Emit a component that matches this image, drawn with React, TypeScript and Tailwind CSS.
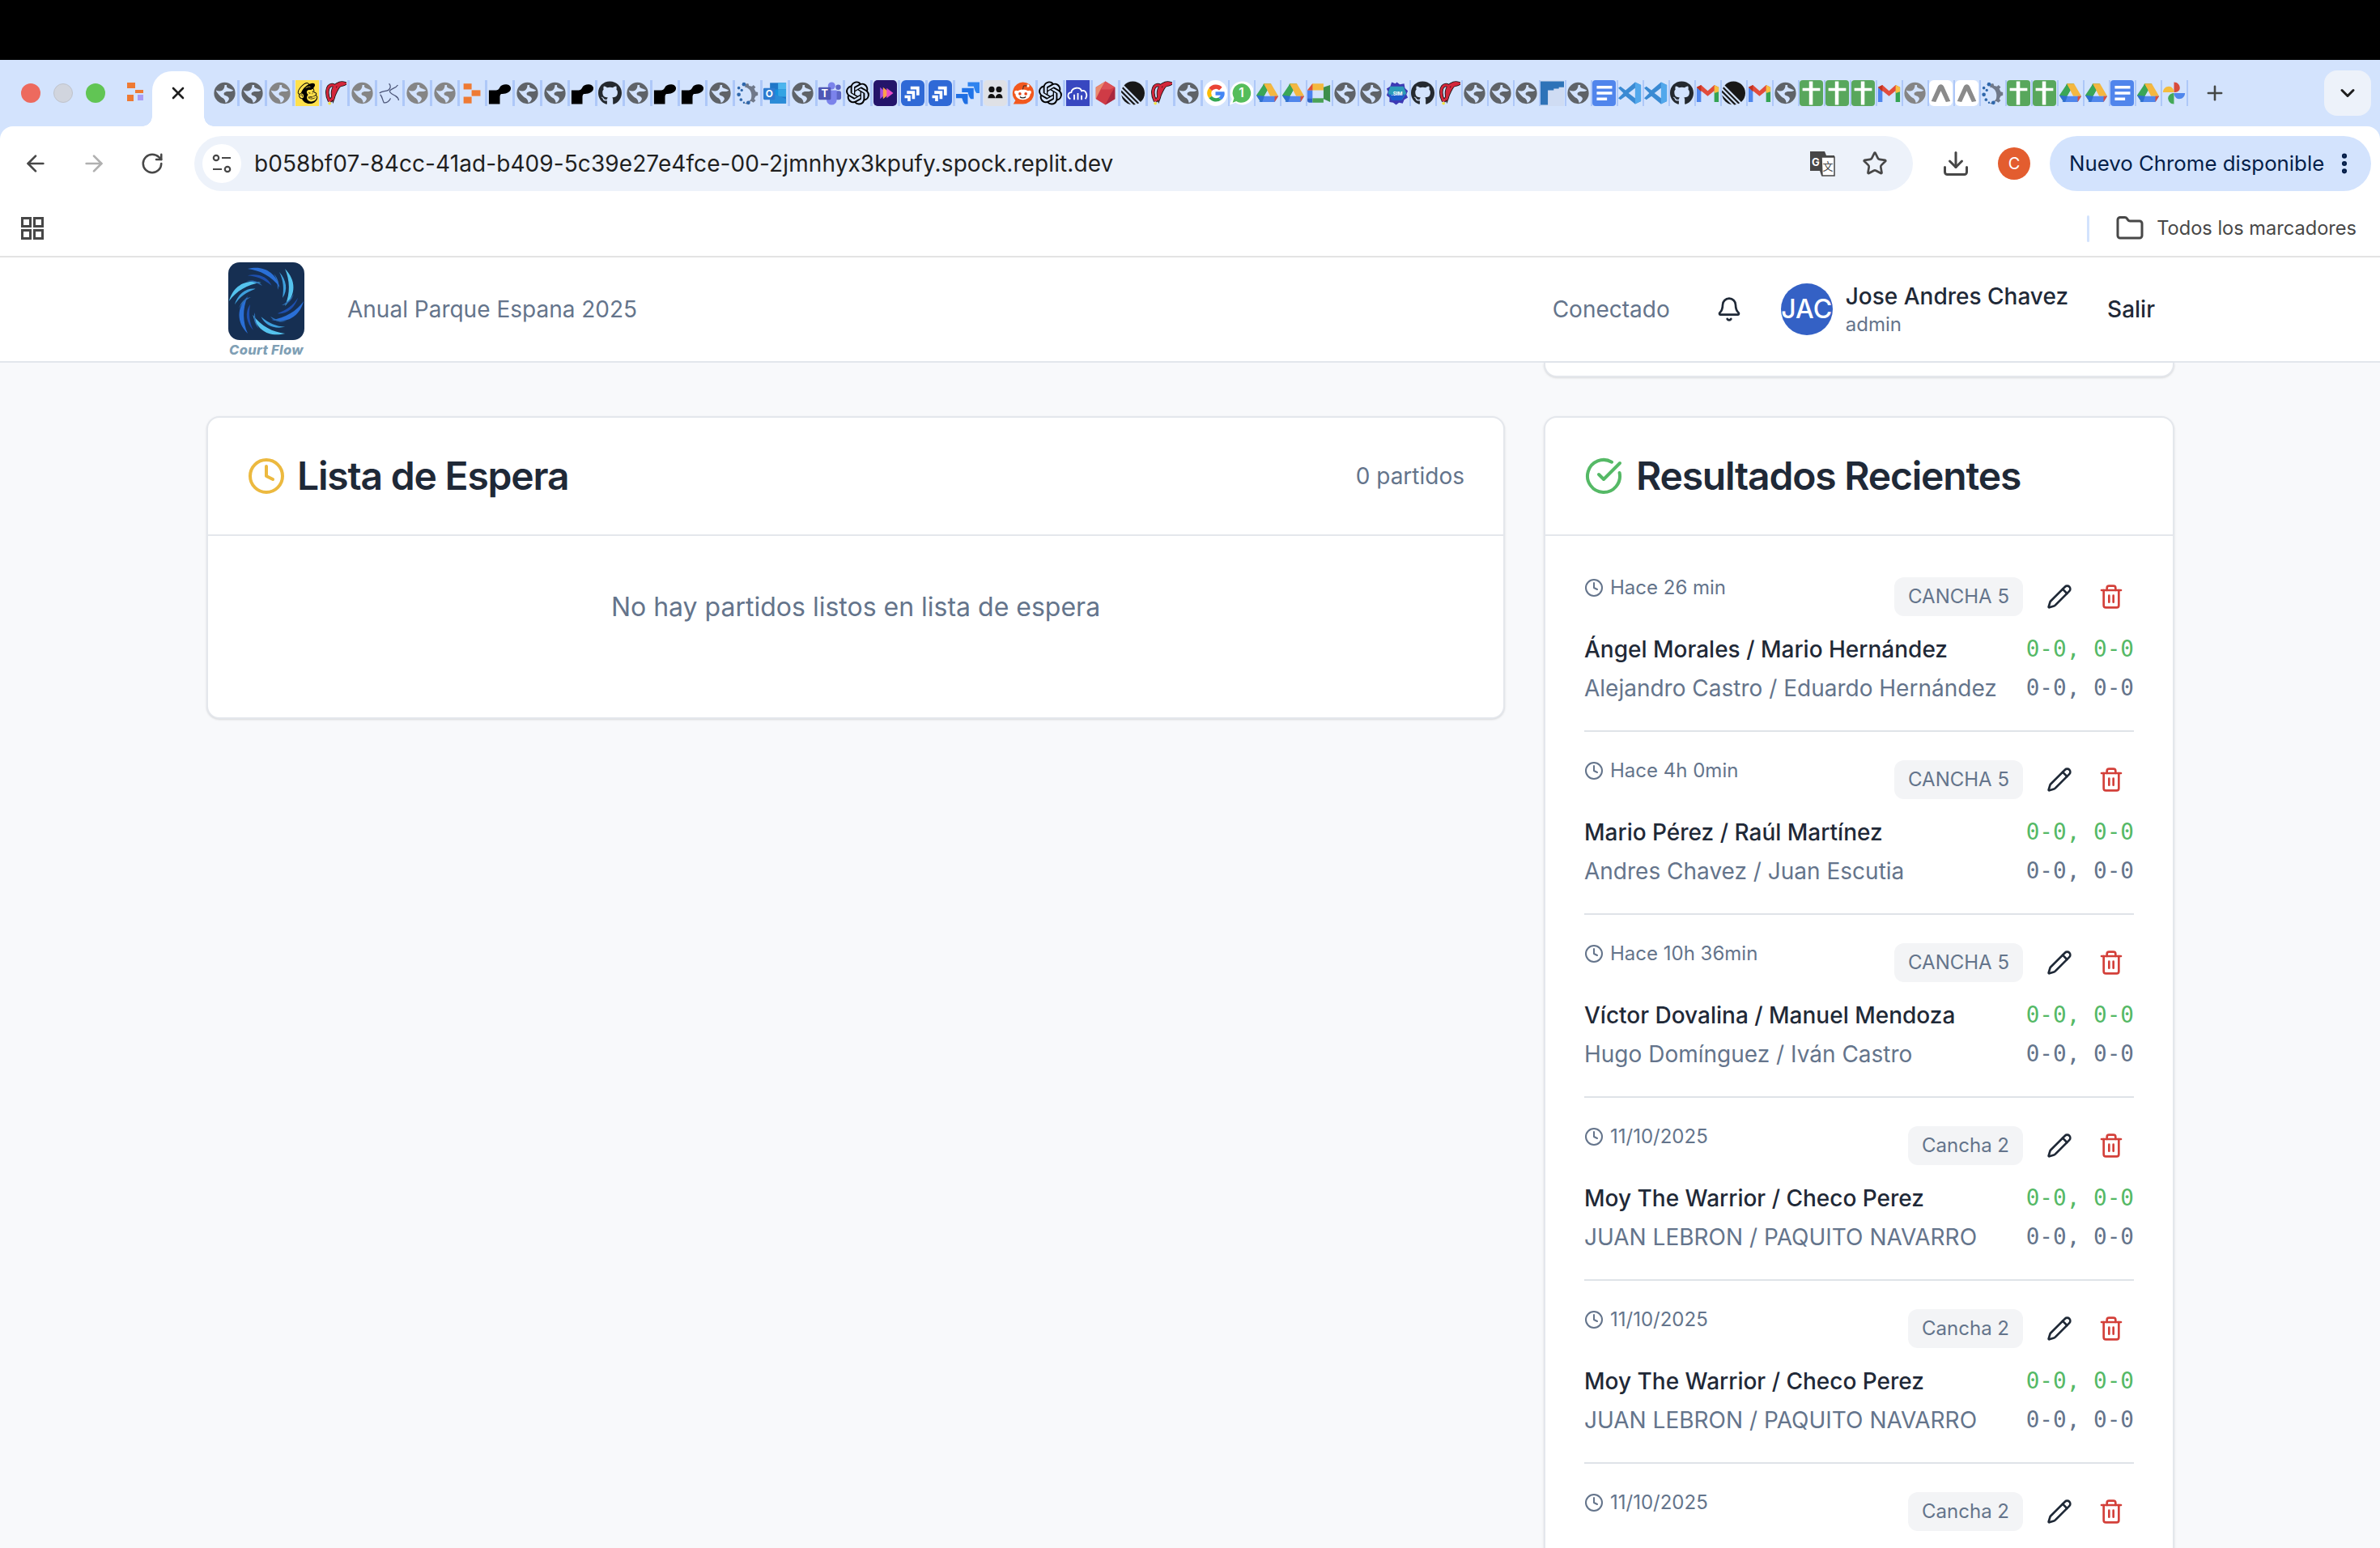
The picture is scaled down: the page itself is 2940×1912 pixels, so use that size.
import {
  ArrowLeft,
  ArrowRight,
  Bell,
  ChevronDown,
  CircleCheckBig,
  Clock,
  Download,
  EllipsisVertical,
  Folder,
  Pencil,
  Plus,
  RotateCw,
  Star,
  Trash2,
  X,
} from "lucide-react";
import { FaGithub } from "react-icons/fa";
import { SiLinear, SiMailchimp, SiOpenai } from "react-icons/si";

// ---- favicons in the tab strip ----

const Box = ({ children }: { children: React.ReactNode }) => (
  <svg viewBox="0 0 32 32" className="h-full w-full">
    {children}
  </svg>
);

const Globe = ({ color = "#5f6368" }: { color?: string }) => (
  <Box>
    <circle cx="16" cy="16" r="14.5" fill={color} />
    <path
      d="M4 12c3 1 6 2 9 0 2-1 3-4 3-7l3 0c-1 3 1 4 4 5l5 2c-3 3-7 1-10 2-3 1-4 3-2 5 3 1 6 2 6 5-1 3-3 5-5 5 0-3-1-4-3-6-3-2-7-5-10-11z"
      fill="#d3e3fd"
    />
  </Box>
);

const Replit = () => (
  <Box>
    <rect x="4" y="3" width="11" height="8" fill="#ee7a33" />
    <rect x="15" y="12" width="12" height="8" fill="#ee7a33" />
    <rect x="4" y="21" width="11" height="9" fill="#ee7a33" />
  </Box>
);

const BlackShape = () => (
  <Box>
    <path d="M1 12h10c3 0 4-2 5-4 2-5 14-6 15 1 0 7-9 8-13 8-2 1-2 3-2 5v9H1z" fill="#000" />
  </Box>
);

const redPath = "M9 27C4 18 5 6 12 5c6-1 5 9 2 17-2-8 0-15 6-18 3-2 7-2 10-1-3 2-7 1-9 4-3 4-5 9-7 14-1 3-3 4-5 6";

const RedP = () => (
  <Box>
    <path d={redPath} fill="none" stroke="#111" strokeWidth="5" />
    <path d={redPath} fill="none" stroke="#d3273b" strokeWidth="3.200" />
    <circle cx="9" cy="30" r="2" fill="#f4e542" />
  </Box>
);

const Swirl = () => (
  <Box>
    <path
      d="M15 3c3 3 2 7-1 9-4 2-9 1-12 4M27 5c-3 5-9 4-11 8-1 3 5 5 8 7 3 2 4 4 4 6M3 18c3 3 3 8 5 11 3 1 8-2 9-6"
      fill="none"
      stroke="#4b5578"
      strokeWidth="1.400"
    />
  </Box>
);

const Gear = () => (
  <Box>
    <path
      d="M14 3l3 0 1 3 4 1 2-2 3 3-2 2 2 4 3 1v4l-3 1-2 4 2 2-3 3-3-2-4 1-2 3-3-1c3-1 8-3 9-7 1-5 0-10-4-13-2-2-4-2-5-2z"
      fill="#70798a"
    />
    <circle cx="11" cy="4" r="2.600" fill="#2f67ab" />
    <circle cx="4" cy="9" r="2" fill="#2f67ab" />
    <circle cx="8" cy="12" r="1.800" fill="#2f67ab" />
    <circle cx="4" cy="18" r="2.600" fill="#2f67ab" />
    <circle cx="7" cy="25" r="2" fill="#2f67ab" />
    <circle cx="11" cy="29" r="1.300" fill="#2f67ab" />
    <circle cx="17" cy="29" r="2.600" fill="#2f67ab" />
  </Box>
);

const Outlook = () => (
  <Box>
    <rect x="9" y="2" width="22" height="28" fill="#1f76c8" />
    <path d="M20 2h11v9H20z" fill="#4cb5ee" />
    <path d="M9 11h11v10H9z" fill="#1490df" />
    <path d="M20 11h11v10H20z" fill="#33a3e3" />
    <path d="M9 15l22 9v6H9z" fill="#2a8cd8" />
    <rect x="0" y="9" width="16" height="16" rx="1.500" fill="#2e7bd0" />
    <text x="8" y="22" fontSize="13" fontWeight="700" fill="#fff" textAnchor="middle" fontFamily="Inter">
      O
    </text>
  </Box>
);

const Teams = () => (
  <Box>
    <circle cx="18" cy="6" r="5" fill="#7b83eb" />
    <circle cx="27" cy="8" r="3.500" fill="#5d66c6" />
    <rect x="23" y="13" width="8" height="12" rx="3" fill="#5d66c6" />
    <path d="M11 12h14v13a7 7 0 0 1-14 0z" fill="#7b83eb" />
    <rect x="0" y="8" width="17" height="17" rx="1.500" fill="#4f58b5" />
    <text x="8.500" y="21.500" fontSize="14" fontWeight="700" fill="#fff" textAnchor="middle" fontFamily="Inter">
      T
    </text>
  </Box>
);

const PurplePlay = () => (
  <div className="h-full w-full rounded-[5px] bg-[#24146a]">
    <Box>
      <path d="M9 8l9 8-9 8z" fill="#a44de0" />
      <path d="M13 8l10 8-10 8z" fill="#ff9f4a" />
      <path d="M18 9l9 7-9 7z" fill="#e94bc8" />
    </Box>
  </div>
);

const JiraBlue = () => (
  <div className="h-full w-full rounded-[6px] bg-[#2f69d6]">
    <Box>
      <path d="M13 7h12v12h-4v-8h-8zM8 13h11v11h-4v-7H8zM5 19h8v8H9v-4H5z" fill="#fff" />
    </Box>
  </div>
);

const JiraPlain = () => (
  <Box>
    <path d="M16 1h16v15h-4c-3-3-3-7-4-9h-8z" fill="#2f84ef" />
    <path d="M8 9h16v15h-4c-3-3-3-7-4-9H8z" fill="#2174e8" />
    <path d="M0 17h16v14h-4c-3-3-3-6-4-8H0z" fill="#1f6fe3" />
  </Box>
);

const People = () => (
  <div className="flex h-full w-full items-center justify-center rounded-[5px] bg-[#dfe1e6]">
    <Box>
      <circle cx="11" cy="11" r="4" fill="#111" />
      <circle cx="21" cy="11" r="4" fill="#111" />
      <path d="M6 23c0-8 9-8 10 0zM16 23c1-8 10-8 10 0z" fill="#111" />
    </Box>
  </div>
);

const Reddit = () => (
  <Box>
    <path d="M16 1a15 15 0 1 1 0 30H3l3-5A15 15 0 0 1 16 1z" fill="#f2581e" />
    <ellipse cx="16" cy="18" rx="10" ry="7" fill="#fff" />
    <circle cx="7" cy="15" r="2.500" fill="#fff" />
    <circle cx="25" cy="15" r="2.500" fill="#fff" />
    <circle cx="12" cy="17" r="2" fill="#e2431a" />
    <circle cx="20" cy="17" r="2" fill="#e2431a" />
    <path d="M12 21c2 2 6 2 8 0" stroke="#222" strokeWidth="1.400" fill="none" />
    <circle cx="23" cy="6" r="2" fill="#fff" />
    <path d="M16 11l1-5 5 0" stroke="#222" strokeWidth="1" fill="none" />
  </Box>
);

const CloudBars = () => (
  <div className="h-full w-full bg-[#3847c0]">
    <Box>
      <path
        d="M6 24c-5-2-4-9 1-9 1-7 12-8 14-2 6-2 9 6 5 11"
        fill="none"
        stroke="#fff"
        strokeWidth="2"
      />
      <path d="M10 18h2v7h-2zM15 16h2v9h-2zM20 19h2v6h-2z" fill="#fff" />
    </Box>
  </div>
);

const Gem = () => (
  <Box>
    <path d="M16 0l13 8v16l-13 8-13-8V8z" fill="#cf3b46" />
    <path d="M16 0L3 8v16l7-14z" fill="#ea8a6e" />
    <path d="M16 0l13 8-7 3H10z" fill="#dc5157" />
    <path d="M29 8v16l-13 8 8-16z" fill="#a9283f" />
  </Box>
);

const Google = () => (
  <div className="h-full w-full rounded-full bg-white">
    <Box>
      <path d="M25 8a12 12 0 0 0-18 1l4 4a7 7 0 0 1 10-1z" fill="#ea4335" />
      <path d="M7 9a12 12 0 0 0 0 14l4-3a7 7 0 0 1 0-7z" fill="#fbbc05" />
      <path d="M7 23a12 12 0 0 0 17 2l-4-3a7 7 0 0 1-9-2z" fill="#34a853" />
      <path d="M28 14H16v5h7a6 6 0 0 1-3 3l4 3c4-3 5-7 4-11z" fill="#4285f4" />
    </Box>
  </div>
);

const WhatsappOne = () => (
  <Box>
    <path d="M16 0a16 16 0 1 1-8 29l-8 3 3-8A16 16 0 0 1 16 0z" fill="#fff" />
    <path d="M16 3a13 13 0 1 1-7 24l-5 2 2-6A13 13 0 0 1 16 3z" fill="#55bd5b" />
    <text x="16" y="22" fontSize="17" fontWeight="600" fill="#fff" textAnchor="middle" fontFamily="Inter">
      1
    </text>
  </Box>
);

const Drive = () => (
  <Box>
    <path d="M11 3h10l-9 16-6-0z" fill="#2f9c4f" />
    <path d="M21 3l10 17H20L11 3z" fill="#f4b740" />
    <path d="M7 20h24l-5 8H5z" fill="#4f86ec" />
    <path d="M11 4l5 8-9 16-6-9z" fill="#3aa657" />
    <path d="M26 20h5l-5 8z" fill="#dd4f3c" />
    <path d="M1 19l6 9h2l3-8z" fill="#2f6fd0" />
  </Box>
);

const Meet = () => (
  <Box>
    <path d="M7 3h15v9H0z" fill="#f4b93f" />
    <path d="M0 12h7v11H0z" fill="#4a82ee" />
    <path d="M0 23h7v6H3a3 3 0 0 1-3-3z" fill="#2f64c7" />
    <path d="M7 23h15v6H7z" fill="#4aa256" />
    <path d="M22 8v16l9 4V5z" fill="#3d8f4b" />
    <path d="M7 3v9H0z" fill="#dd4f3c" />
  </Box>
);

const Sim = () => (
  <Box>
    <path d="M16 1l4 3 6-1 1 6 4 4-2 5 2 4-5 3-2 5-5-1-4 3-4-3-5-1 0-6-4-3 2-5-2-4 5-3 2-6 5 2z" fill="#3d39b4" />
    <path d="M7 7h18l4 9-6 9H9L4 16z" fill="#2c9bb8" />
    <path d="M5 18h22l-5 8H9z" fill="#1c5ccb" />
    <text x="16" y="19" fontSize="7" fontWeight="700" fill="#fff" textAnchor="middle" fontFamily="Inter">
      .SIM
    </text>
  </Box>
);

const BlueF = () => (
  <div className="h-full w-full bg-[#cfdcf3]">
    <Box>
      <path d="M0 0h32v8H25v2h-7v2h-8v20H0z" fill="#2e73b8" />
    </Box>
  </div>
);

const Docs = () => (
  <div className="h-full w-full rounded-[4px] bg-[#5085ec]">
    <Box>
      <path d="M6 6h21v4H6zM6 14h21v4H6zM6 22h14v4H6z" fill="#fff" />
    </Box>
  </div>
);

const VsCode = () => (
  <Box>
    <path d="M23 1l8 4v22l-8 4-13-11-7 5-3-2 7-7-7-7 3-2 7 5z" fill="#3a8ad3" />
    <path d="M23 1l8 4v22l-8 4z" fill="#52a8ec" />
    <path d="M23 9v14l-9-7z" fill="#d3e3fd" />
  </Box>
);

const Gmail = () => (
  <Box>
    <path d="M1 8v20h6V13z" fill="#4f86ec" />
    <path d="M31 8v20h-6V13z" fill="#35a353" />
    <path d="M1 8l15 12L31 8l-6-3-9 8-9-8z" fill="#e24c3c" />
    <path d="M25 5l6 3v6l-6 2z" fill="#f6c143" />
    <path d="M1 8l6-3v9z" fill="#c23321" />
  </Box>
);

const SheetPlus = () => (
  <div className="h-full w-full rounded-[4px] bg-[#58a75c]">
    <Box>
      <path d="M4 9h9V0h5v9h10v4H18v19h-5V13H4z" fill="#fff" />
    </Box>
  </div>
);

const AWhite = () => (
  <div className="h-full w-full rounded-[6px] bg-white">
    <Box>
      <path d="M16 4c2 0 3 1 4 3l9 20-6 1-7-15-7 15-6-1 9-20c1-2 2-3 4-3z" fill="#8a8a8a" />
    </Box>
  </div>
);

const Photos = () => (
  <Box>
    <path d="M16 15V1c5 0 8 4 8 8s-4 6-8 6z" fill="#d84b3c" />
    <path d="M16 15H1c0-5 4-8 8-8s7 4 7 8z" fill="#f4bd3e" />
    <path d="M16 16v15c-5 0-8-4-8-8s4-7 8-7z" fill="#44a958" />
    <path d="M16 16h15c0 5-4 8-8 8s-7-4-7-8z" fill="#4f86ec" />
  </Box>
);

const Mailchimp = () => (
  <div className="flex h-full w-full items-center justify-center bg-[#ffe04b]">
    <SiMailchimp className="h-[26px] w-[26px] text-black" />
  </div>
);

const Github = () => <FaGithub className="h-full w-full text-[#24292f]" />;
const OpenAi = () => <SiOpenai className="h-full w-full text-black" />;
const Linear = () => <SiLinear className="h-full w-full text-[#171717]" />;

const G = () => <Globe />;
const L = () => <Globe color="#858585" />;

const favicons: React.ComponentType[] = [
  G, G, L, Mailchimp, RedP, L, Swirl, L, L, Replit, BlackShape, G, G, BlackShape, Github, G, BlackShape, BlackShape, G,
  Gear, Outlook, G, Teams, OpenAi, PurplePlay, JiraBlue, JiraBlue, JiraPlain, People, Reddit, OpenAi, CloudBars, Gem,
  Linear, RedP, G, Google, WhatsappOne, Drive, Drive, Meet, G, G, Sim, Github, RedP, G, G, G, BlueF, G, Docs, VsCode,
  VsCode, Github, Gmail, Linear, Gmail, G, SheetPlus, SheetPlus, SheetPlus, Gmail, L, AWhite, AWhite, Gear, SheetPlus,
  SheetPlus, Drive, Drive, Docs, Drive, Photos,
];

// ---- browser chrome ----

const TabStrip = () => (
  <div className="flex h-[82px] items-center bg-[#d3e3fd]">
    <div className="ml-[26px] flex gap-[16px]">
      <span className="h-[24px] w-[24px] rounded-full bg-[#ed6a5e]" />
      <span className="h-[24px] w-[24px] rounded-full border border-[#bfc3cc] bg-[#d1d5de]" />
      <span className="h-[24px] w-[24px] rounded-full bg-[#61c554]" />
    </div>
    <div className="ml-[26px] h-[26px] w-[26px]">
      <svg viewBox="0 0 26 26" className="h-full w-full">
        <rect x="1" y="0" width="10" height="7" fill="#ee7a33" />
        <rect x="11" y="9" width="10" height="4" fill="#ee7a33" />
        <rect x="1" y="15" width="8" height="8" fill="#ee7a33" />
        <rect x="14" y="15" width="7" height="7" fill="#a99cf5" />
      </svg>
    </div>
    <div className="relative ml-[6px] mt-[14px] flex h-[68px] w-[64px] items-center justify-center self-end rounded-t-[24px] bg-white pb-[14px]">
      <span className="absolute bottom-0 left-[-12px] h-[12px] w-[12px] bg-[radial-gradient(circle_at_0_0,transparent_11.500px,#ffffff_12px)]" />
      <span className="absolute bottom-0 right-[-12px] h-[12px] w-[12px] bg-[radial-gradient(circle_at_100%_0,transparent_11.500px,#ffffff_12px)]" />
      <X size={24} strokeWidth={2.6} className="text-[#1f1f1f]" />
    </div>
    <div className="ml-[11px] flex">
      {favicons.map((Icon, i) => (
        <div key={i} className={i < 36 ? "flex w-[34px] shrink-0" : "flex w-[32px] shrink-0"}>
          <div className="h-[32px] w-[29px] shrink-0 overflow-hidden">
            <Icon />
          </div>
          <span className="ml-px h-[32px] w-[3px] bg-[#aec8f8]" />
        </div>
      ))}
    </div>
    <Plus size={28} strokeWidth={2.2} className="ml-[19px] text-[#444746]" />
    <div className="ml-auto mr-[11px] flex h-[56px] w-[58px] items-center justify-center rounded-[16px] bg-[#edf2fa]">
      <ChevronDown size={28} strokeWidth={2.6} className="text-[#1f1f1f]" />
    </div>
  </div>
);

const Toolbar = () => (
  <div className="flex h-[80px] items-center rounded-t-[16px] bg-white pt-[12px]">
    <ArrowLeft size={32} strokeWidth={2} className="ml-[28px] text-[#474747]" />
    <ArrowRight size={32} strokeWidth={2} className="ml-[40px] text-[#b0b0b0]" />
    <RotateCw size={30} strokeWidth={2} className="ml-[41px] text-[#474747]" />
    <div className="ml-[37px] flex h-[68px] w-[2123px] items-center rounded-[34px] bg-[#edf2fa] pl-[10px]">
      <div className="flex h-[48px] w-[48px] items-center justify-center rounded-full bg-white">
        <svg viewBox="0 0 28 28" className="h-[28px] w-[28px]" fill="none" stroke="#474747" strokeWidth="2.200">
          <circle cx="7" cy="7" r="3.200" />
          <path d="M14 7h11M3 21h11" />
          <circle cx="21" cy="21" r="3.200" />
        </svg>
      </div>
      <span className="ml-[16px] font-['Inter',sans-serif] text-[28px] tracking-[0.09px] text-[#1f1f1f]">
        b058bf07-84cc-41ad-b409-5c39e27e4fce-00-2jmnhyx3kpufy.spock.replit.dev
      </span>
      <div className="ml-auto mr-[31px] flex items-center gap-[32px]">
        <svg viewBox="0 0 34 34" className="h-[34px] w-[34px]">
          <path d="M2 2h18l2 5h10v25H16l-2-6H2z" fill="#474747" />
          <path d="M16 9h16v23H17z" fill="#fff" stroke="#474747" strokeWidth="1.500" />
          <text x="9" y="20" fontSize="13" fontWeight="700" fill="#fff" textAnchor="middle" fontFamily="Inter">
            G
          </text>
          <text x="24" y="25" fontSize="13" fill="#474747" textAnchor="middle" fontFamily="Noto Sans CJK SC">
            文
          </text>
        </svg>
        <Star size={32} strokeWidth={2} className="text-[#474747]" />
      </div>
    </div>
    <Download size={36} strokeWidth={2} className="ml-[35px] text-[#474747]" />
    <div className="ml-[34px] flex h-[40px] w-[40px] items-center justify-center rounded-full bg-[#e35d2f] font-['Inter',sans-serif] text-[20px] text-white">
      C
    </div>
    <div className="ml-[24px] flex h-[68px] w-[397px] items-center rounded-[34px] bg-[#d3e3fd] pl-[24px] font-['Inter',sans-serif] text-[25.8px] text-[#041e49]">
      Nuevo Chrome disponible
      <EllipsisVertical size={32} strokeWidth={2.6} className="ml-[9px] text-[#041e49]" />
    </div>
  </div>
);

const BookmarksBar = () => (
  <div className="flex h-[82px] shrink-0 items-center border-b-2 border-[#e3e3e3] bg-white pl-[26px] pt-[12px]">
    <svg viewBox="0 0 28 28" className="h-[28px] w-[28px]" fill="none" stroke="#474747" strokeWidth="3">
      <rect x="1.500" y="1.500" width="10" height="10" />
      <rect x="16.500" y="1.500" width="10" height="10" />
      <rect x="1.500" y="16.500" width="10" height="10" />
      <rect x="16.500" y="16.500" width="10" height="10" />
    </svg>
    <div className="ml-auto flex items-center pr-[29px]">
      <span className="mr-[32px] h-[33px] w-[3px] rounded-full bg-[#d3e3fd]" />
      <Folder size={36} strokeWidth={2} className="text-[#474747]" />
      <span className="ml-[15px] font-['Inter',sans-serif] text-[23.6px] text-[#474747]">Todos los marcadores</span>
    </div>
  </div>
);

// ---- app ----

const swirlArms = [0, 60, 120, 180, 240, 300];

const Logo = () => (
  <div className="flex flex-col items-center">
    <div className="h-[96px] w-[94px] overflow-hidden rounded-[14px] bg-[#162f52]">
      <svg viewBox="0 0 94 96" className="h-full w-full">
        {swirlArms.map((a, i) => (
          <g key={a} transform={`rotate(${a} 47 48)`}>
            <path d="M70 8C84 22 84 40 70 54 77 38 76 22 70 8z" fill={i % 2 ? "#2a6fd6" : "#55c3ee"} />
            <path d="M63 12C72 22 74 34 67 44 69 32 68 22 63 12z" fill={i % 2 ? "#1d4fae" : "#3d9fdc"} />
            <path d="M56 14C62 20 64 28 61 34 61 27 60 20 56 14z" fill="#2c6db5" />
          </g>
        ))}
      </svg>
    </div>
    <span className="mt-[4px] font-['Inter',sans-serif] text-[16.500px] leading-[16px] font-extrabold italic tracking-[0.3px] text-[#7f9fb5]">
      Court Flow
    </span>
  </div>
);

const Header = () => (
  <header className="shrink-0 border-b-2 border-[#e2e6ec] bg-white">
    <div className="mx-auto flex h-[128px] w-[2430px] items-center pl-[27px] pr-[23px]">
      <Logo />
      <span className="ml-[53px] text-[28px] text-[#64748b]">Anual Parque Espana 2025</span>
      <div className="ml-auto flex items-center">
        <span className="text-[28px] text-[#64748b]">Conectado</span>
        <Bell size={32} strokeWidth={2} className="ml-[57px] text-[#1f2937]" />
        <div className="ml-[48px] flex h-[64px] w-[64px] items-center justify-center rounded-full bg-[#3461c5] text-[32px] font-medium text-white">
          JAC
        </div>
        <div className="ml-[16px] flex flex-col">
          <span className="text-[28px] leading-[36px] font-medium text-[#1f2937]">Jose Andres Chavez</span>
          <span className="mt-px text-[24px] leading-[32px] text-[#64748b]">admin</span>
        </div>
        <span className="ml-[48px] text-[28px] font-medium text-[#1f2937]">Salir</span>
      </div>
    </div>
  </header>
);

type Result = { when: string; court: string; first?: string; second?: string };

const results: Result[] = [
  { when: "Hace 26 min", court: "CANCHA 5", first: "Ángel Morales / Mario Hernández", second: "Alejandro Castro / Eduardo Hernández" },
  { when: "Hace 4h 0min", court: "CANCHA 5", first: "Mario Pérez / Raúl Martínez", second: "Andres Chavez / Juan Escutia" },
  { when: "Hace 10h 36min", court: "CANCHA 5", first: "Víctor Dovalina / Manuel Mendoza", second: "Hugo Domínguez / Iván Castro" },
  { when: "11/10/2025", court: "Cancha 2", first: "Moy The Warrior / Checo Perez", second: "JUAN LEBRON / PAQUITO NAVARRO" },
  { when: "11/10/2025", court: "Cancha 2", first: "Moy The Warrior / Checo Perez", second: "JUAN LEBRON / PAQUITO NAVARRO" },
  // last row runs off the bottom of the window
  { when: "11/10/2025", court: "Cancha 2" },
];

const ResultRow = ({ item }: { item: Result }) => (
  <div className={item.first ? "mb-[32px] border-b-2 border-[#dfe3e8] pb-[32px]" : ""}>
    <div className="mb-[18px] flex h-[54px] items-start">
      <Clock size={24} strokeWidth={2} className="mt-[4px] text-[#64748b]" />
      <span className="ml-[8px] text-[24px] leading-[32px] text-[#64748b]">{item.when}</span>
      <div className="ml-auto flex items-center pr-[12px] pt-[3px]">
        <span className="rounded-[12px] bg-[#f3f4f6] px-[17px] text-[24px] leading-[48px] text-[#64748b]">
          {item.court}
        </span>
        <Pencil size={32} strokeWidth={2} className="ml-[29px] text-[#1f2937]" />
        <Trash2 size={32} strokeWidth={2} className="ml-[32px] text-[#d3403a]" />
      </div>
    </div>
    {item.first && (
      <>
        <div className="flex items-center justify-between">
          <span className="text-[28px] leading-[40px] font-medium text-[#1f2937]">{item.first}</span>
          <span className="font-['DejaVu_Sans_Mono',monospace] text-[27.700px] leading-[40px] text-[#55b966]">
            0-0, 0-0
          </span>
        </div>
        <div className="mt-[8px] flex items-center justify-between">
          <span className="text-[28px] leading-[40px] text-[#64748b]">{item.second}</span>
          <span className="font-['DejaVu_Sans_Mono',monospace] text-[27.700px] leading-[40px] text-[#64748b]">
            0-0, 0-0
          </span>
        </div>
      </>
    )}
  </div>
);

export default function App() {
  return (
    <div className="flex h-screen flex-col overflow-hidden bg-[#f8f9fb] font-['Inter',sans-serif]">
      <div className="h-[74px] shrink-0 bg-black" />
      <div className="shrink-0 bg-[#d3e3fd]">
        <TabStrip />
        <Toolbar />
      </div>
      <BookmarksBar />
      <Header />
      <main className="mx-auto flex w-[2430px] items-start justify-between">
        <section className="mt-[66px] w-[1604px] rounded-[16px] border-2 border-[#e4e7ec] bg-white shadow-sm">
          <div className="flex h-[146px] items-center justify-between border-b-2 border-[#e4e7ec] px-[48px]">
            <div className="flex items-center gap-[14px]">
              <Clock size={48} strokeWidth={2} className="text-[#ecb93f]" />
              <h2 className="text-[48px] font-semibold tracking-tight text-[#1f2937]">Lista de Espera</h2>
            </div>
            <span className="text-[28px] text-[#64748b]">0 partidos</span>
          </div>
          <p className="h-[224px] pt-[66px] text-center text-[32px] leading-[44px] text-[#64748b]">
            No hay partidos listos en lista de espera
          </p>
        </section>
        <div className="-mr-px w-[779px]">
          <div className="h-[18px] rounded-b-[16px] border-2 border-t-0 border-[#e4e7ec] bg-white shadow-sm" />
          <section className="mt-[48px] rounded-t-[16px] border-2 border-[#e4e7ec] bg-white shadow-sm">
            <div className="flex h-[146px] items-center gap-[16px] border-b-2 border-[#e4e7ec] px-[48px]">
              <CircleCheckBig size={48} strokeWidth={2} className="text-[#55b966]" />
              <h2 className="text-[48px] font-semibold tracking-tight text-[#1f2937]">Resultados Recientes</h2>
            </div>
            <div className="px-[48px] pt-[48px]">
              {results.map((item, i) => (
                <ResultRow key={i} item={item} />
              ))}
            </div>
          </section>
        </div>
      </main>
    </div>
  );
}
